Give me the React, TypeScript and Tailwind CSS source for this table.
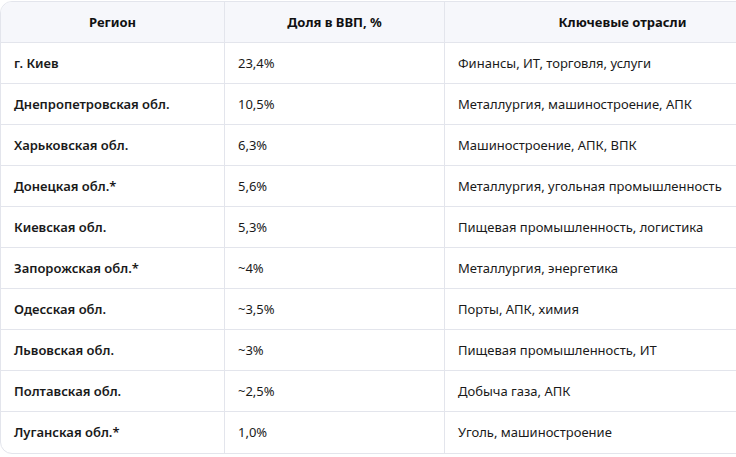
import React from 'react';

interface Row {
  region: string;
  share: string;
  sectors: string;
}

const rows: Row[] = [
  { region: 'г. Киев', share: '23,4%', sectors: 'Финансы, ИТ, торговля, услуги' },
  { region: 'Днепропетровская обл.', share: '10,5%', sectors: 'Металлургия, машиностроение, АПК' },
  { region: 'Харьковская обл.', share: '6,3%', sectors: 'Машиностроение, АПК, ВПК' },
  { region: 'Донецкая обл.*', share: '5,6%', sectors: 'Металлургия, угольная промышленность' },
  { region: 'Киевская обл.', share: '5,3%', sectors: 'Пищевая промышленность, логистика' },
  { region: 'Запорожская обл.*', share: '~4%', sectors: 'Металлургия, энергетика' },
  { region: 'Одесская обл.', share: '~3,5%', sectors: 'Порты, АПК, химия' },
  { region: 'Львовская обл.', share: '~3%', sectors: 'Пищевая промышленность, ИТ' },
  { region: 'Полтавская обл.', share: '~2,5%', sectors: 'Добыча газа, АПК' },
  { region: 'Луганская обл.*', share: '1,0%', sectors: 'Уголь, машиностроение' },
];

const cell = 'h-[41px] flex items-center px-[13px] pt-px border-b border-[#e3e5ec]';

const App: React.FC = () => {
  return (
    <div
      className="w-[736px] h-[457px] overflow-hidden bg-white text-[13px] text-[#1a1a1a]"
      style={{ fontFamily: '"Noto Sans", "Open Sans", sans-serif' }}
    >
      <div className="mt-px w-[801px] border border-[#e3e5ec] rounded-xl overflow-hidden">
        <div className="grid grid-cols-[224px_220px_1fr]">
          <div className={`${cell} justify-center border-r bg-[#f6f7fb] font-bold text-[#111]`}>Регион</div>
          <div className={`${cell} justify-center border-r bg-[#f6f7fb] font-bold text-[#111]`}>Доля в ВВП, %</div>
          <div className={`${cell} justify-center bg-[#f6f7fb] font-bold text-[#111]`}>Ключевые отрасли</div>
          {rows.map((r, i) => {
            const last = i === rows.length - 1 ? 'border-b-0' : '';
            return (
              <React.Fragment key={r.region}>
                <div className={`${cell} ${last} border-r font-semibold`}>{r.region}</div>
                <div className={`${cell} ${last} border-r`}>{r.share}</div>
                <div className={`${cell} ${last} whitespace-nowrap`}>{r.sectors}</div>
              </React.Fragment>
            );
          })}
        </div>
      </div>
    </div>
  );
};

export default App;
